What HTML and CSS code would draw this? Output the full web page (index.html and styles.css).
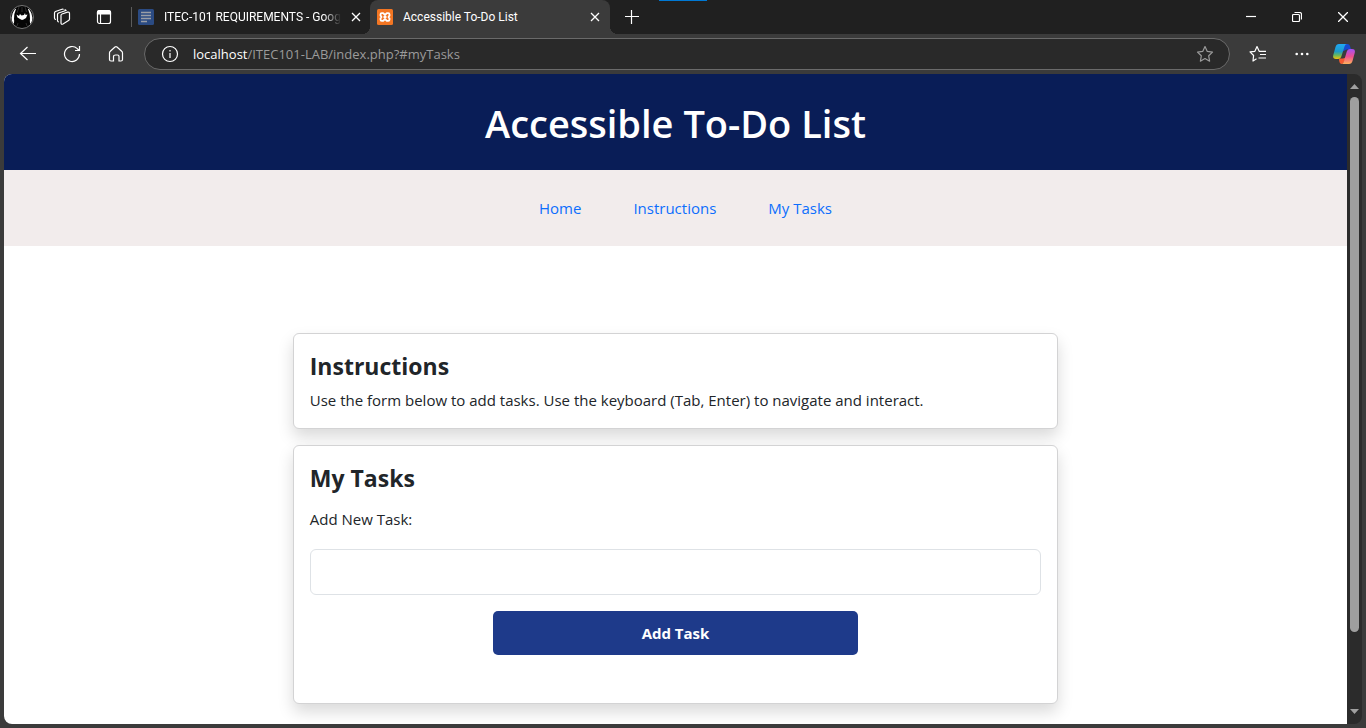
FILE: index.html
```html
<!DOCTYPE html>
<html lang="en">
<head>
<meta charset="utf-8">
<title>Accessible To-Do List</title>
<link rel="stylesheet" href="styles.css">
</head>
<body class="browser">
<div class="tabstrip">
  <button class="tool" aria-label="Profile">
    <svg width="24" height="24" viewBox="0 0 24 24"><circle cx="12" cy="12" r="11.5" fill="#050505"/><path d="M5 4Q-1 12 3.500 19Q4.500 17 4 14Q4 8 6 4ZM19 4Q25 12 20.500 19Q19.500 17 20 14Q20 8 18 4Z" fill="#fff"/><path d="M6.500 9.500 9 11l1-2 1.500 1.500L14 10l1-2 .5 2 2-.5L16 13l-2.500 1.500-1.500.5-2-1-2.500-1.500Z" fill="#fff"/><path d="M9 2 7 8M12 2v5M15 2l1.500 5M8 18l-1 3M16 18l1 3" stroke="#3c3c3c" stroke-width=".7"/><circle cx="12" cy="12" r="11.500" fill="none" stroke="#777"/></svg>
  </button>
  <button class="tool" aria-label="Workspaces">
    <svg class="line" width="18" height="18" viewBox="0 0 18 18"><path d="M9 6 14.500 4.200q2-.4 2 1.300v5.500q0 1-1 1.500l-5.500 3.500q-2 .8-2-1V7.500q0-1.200 1-1.500ZM6 14q-1.500 0-1.500-1.500V6.500q0-1 1-1.500L13 2.500q-.3-.8-1.500-.5M3 11.500q-1.500 0-1.500-1.500V5q0-1 1-1.500L9 1.300q1-.3 1.500.200"/></svg>
  </button>
  <button class="tool" aria-label="Tab actions">
    <svg class="line" width="16" height="16" viewBox="0 0 16 16"><rect x="1.500" y="1.500" width="13" height="13" rx="2"/><path d="M1.500 3.500q0-2 2-2h9q2 0 2 2V5h-13Z" fill="#fff"/><path d="M4.500 5v9.500"/></svg>
  </button>
  <span class="divider"></span>
  <div class="tab">
    <svg width="16" height="16" viewBox="0 0 16 16"><rect width="16" height="16" rx="1.500" fill="#2b4b83"/><path d="M3 3.500h10M3 6.500h10M3 9.500h10M3 12.500h6" stroke="#9a9ea6" stroke-width="1.300"/></svg>
    <span class="tab-title faded">ITEC-101 REQUIREMENTS - Goog</span>
    <button class="tab-close" aria-label="Close tab"><svg class="line" width="10" height="10" viewBox="0 0 10 10"><path d="M1 1l8 8M9 1 1 9" stroke-width="1.300"/></svg></button>
  </div>
  <div class="tab active">
    <svg width="16" height="16" viewBox="0 0 16 16"><rect width="16" height="16" rx="1.500" fill="#f37623"/><path d="M4.800 4.200h1.400L8 6l1.800-1.800h1.400q1.300 0 1.300 1.300v1L11.500 8l1 1.500v1q0 1.300-1.300 1.300H9.800L8 10l-1.800 1.800H4.800q-1.300 0-1.300-1.300v-1l1-1.500-1-1.500v-1q0-1.300 1.300-1.300ZM6.500 8h3" fill="none" stroke="#fff" stroke-width="1.800" stroke-linejoin="round"/></svg>
    <span class="tab-title">Accessible To-Do List</span>
    <button class="tab-close" aria-label="Close tab"><svg class="line" width="10" height="10" viewBox="0 0 10 10"><path d="M1 1l8 8M9 1 1 9" stroke-width="1.300"/></svg></button>
  </div>
  <button class="tool" aria-label="New tab">
    <svg class="line" width="14" height="14" viewBox="0 0 14 14"><path d="M0 6.500h14M6.500 0v14"/></svg>
  </button>
  <span class="accent"></span>
  <div class="window-controls">
    <button aria-label="Minimize"><svg class="line" width="10" height="10" viewBox="0 0 10 10"><path d="M0 4.500h10"/></svg></button>
    <button aria-label="Restore"><svg class="line" width="10" height="10" viewBox="0 0 10 10"><rect x=".5" y="2.500" width="7" height="7" rx="1"/><path d="M2.500.500H7.500q2 0 2 2V7.500"/></svg></button>
    <button aria-label="Close"><svg class="line" width="10" height="10" viewBox="0 0 10 10"><path d="M0 0l10 10M10 0 0 10" stroke-width="1.300"/></svg></button>
  </div>
</div>

<div class="toolbar">
  <button class="tool" aria-label="Back"><svg class="line" width="18" height="16" viewBox="0 0 18 16"><path d="M8.500 1 1.500 7.500l7 6.500M1.500 7.500H17"/></svg></button>
  <button class="tool" aria-label="Reload"><svg class="line" width="18" height="18" viewBox="0 0 18 18"><path d="M16.500 9A7.500 7.500 0 1 1 14.300 3.700L16 5.500M16.500 1V5.500h-4.500"/></svg></button>
  <button class="tool" aria-label="Home"><svg class="line" width="16" height="18" viewBox="0 0 16 18"><path d="M1.500 8q0-1 .8-1.700L7 2q1-.8 2 0l4.700 4.300q.8.700.8 1.700v6.500q0 1.500-1.500 1.500h-2V11.500q0-1.500-1.500-1.500h-2Q5.500 10 5.500 11.500V16H3Q1.500 16 1.500 14.500Z"/></svg></button>
  <div class="address">
    <svg class="line" width="18" height="18" viewBox="0 0 18 18"><circle cx="9" cy="9" r="7.500"/><path d="M9 8v5M9 5v1.500"/></svg>
    <span class="url"><span class="host">localhost</span>/ITEC101-LAB/index.php?#myTasks</span>
    <button class="favorite" aria-label="Add to favorites"><svg class="line" width="18" height="18" viewBox="0 0 18 18"><path d="m9 1.500 2.300 4.900 5.200.7-3.800 3.700.9 5.400L9 13.600l-4.600 2.600.9-5.400L1.500 7.100l5.200-.7Z" stroke-linejoin="round"/></svg></button>
  </div>
  <button class="tool" aria-label="Favorites"><svg class="line" width="18" height="18" viewBox="0 0 18 18"><path d="M7.500 13.800 4 16l.6-5.500L1 6.900l4.900-.6L8 1.500l2.200 4.800H17M11 9.500h6M9.500 13h7.500" stroke-linejoin="round"/></svg></button>
  <button class="tool" aria-label="Settings and more"><svg width="14" height="4" viewBox="0 0 14 4" fill="#fff"><circle cx="1.700" cy="2" r="1.300"/><circle cx="7" cy="2" r="1.300"/><circle cx="12.300" cy="2" r="1.300"/></svg></button>
  <button class="tool narrow" aria-label="Copilot">
    <svg width="22" height="22" viewBox="0 0 22 22">
      <defs>
        <linearGradient id="cool" x1="0" y1="0" x2="0" y2="1"><stop offset="0" stop-color="#20a8f5"/><stop offset=".5" stop-color="#1d9bc7"/><stop offset=".75" stop-color="#68b85c"/><stop offset="1" stop-color="#f2c30b"/></linearGradient>
        <linearGradient id="warm" x1="0" y1="0" x2="0" y2="1"><stop offset="0" stop-color="#a350f5"/><stop offset=".5" stop-color="#ed4f91"/><stop offset="1" stop-color="#ffb15a"/></linearGradient>
      </defs>
      <path d="M11 1h3.500q2 0 2.500 2l1 3.500h-4.500l-4 2Z" fill="#1749cf"/>
      <path d="M6 15.500h4l3-1-2 4.500q-1 2-2 2-3 0-3-5.500Z" fill="#f55930"/>
      <path d="M6 1h8q-1.700 0-2.400 2.300L8.500 13q-.8 3-3.500 3H3Q-.7 16 .3 12L2.500 4Q3.300 1 6 1Z" fill="url(#cool)"/>
      <path d="M16 21H8.500q1.700 0 2.300-2.300L13.500 9.500q.8-3.500 3.500-3.500h2q3.700 0 2.700 4L19.500 18q-.8 3-3.500 3Z" fill="url(#warm)"/>
    </svg>
  </button>
</div>

<div class="viewport">
  <div class="page">
    <header class="page-header"><h1>Accessible To-Do List</h1></header>
    <nav class="page-nav">
      <a href="#home">Home</a>
      <a href="#instructions">Instructions</a>
      <a href="#myTasks">My Tasks</a>
    </nav>
    <main class="content">
      <section class="card" id="instructions">
        <h2>Instructions</h2>
        <p>Use the form below to add tasks. Use the keyboard (Tab, Enter) to navigate and interact.</p>
      </section>
      <section class="card tasks" id="myTasks">
        <h2>My Tasks</h2>
        <form class="task-form">
          <label for="task">Add New Task:</label>
          <input type="text" id="task">
          <button type="submit">Add Task</button>
        </form>
      </section>
    </main>
  </div>
  <div class="scrollbar" aria-hidden="true">
    <svg width="9" height="5" viewBox="0 0 9 5"><path d="M0 5 4.500 0 9 5Z" fill="#a0a0a0"/></svg>
    <div class="track"><div class="thumb"></div></div>
    <svg width="9" height="5" viewBox="0 0 9 5"><path d="M0 0h9L4.500 5Z" fill="#a0a0a0"/></svg>
  </div>
</div>
</body>
</html>
```
FILE: styles.css
```css
* {
  box-sizing: border-box;
}

.browser {
  margin: 0;
  height: 100vh;
  display: flex;
  flex-direction: column;
  overflow: hidden;
  background: #3b3b3b;
  color: #fff;
  font-family: "Open Sans", "Noto Sans", sans-serif;
}

button {
  border: 0;
  padding: 0;
  background: none;
  color: inherit;
  font: inherit;
}

svg {
  display: block;
  flex: none;
}

.line {
  fill: none;
  stroke: #fff;
  stroke-width: 1.2;
}

/* Tab strip */
.tabstrip {
  position: relative;
  display: flex;
  align-items: center;
  height: 34px;
  background: #202020;
}

.tool {
  flex: none;
  width: 44px;
  height: 34px;
  display: flex;
  align-items: center;
  justify-content: center;
}

.tool.narrow {
  width: 40px;
}

.tabstrip .tool:nth-child(2) {
  width: 36px;
}

.tabstrip .tool:nth-child(3) {
  width: 48px;
}

.divider {
  width: 1px;
  height: 20px;
  margin-left: 3px;
  background: #5c5c5c;
}

.tab {
  display: flex;
  align-items: center;
  gap: 10px;
  width: 238px;
  height: 34px;
  padding: 0 10px 0 6px;
  font-family: Roboto, sans-serif;
  font-size: 12px;
}

.tab.active {
  position: relative;
  width: 240px;
  padding-left: 7px;
  border-radius: 8px 8px 0 0;
  background: #3b3b3b;
}

.tab.active::before,
.tab.active::after {
  content: "";
  position: absolute;
  bottom: 0;
  width: 8px;
  height: 8px;
}

.tab.active::before {
  right: 100%;
  background: radial-gradient(circle at 0 0, #202020 8px, #3b3b3b 8px);
}

.tab.active::after {
  left: 100%;
  background: radial-gradient(circle at 100% 0, #202020 8px, #3b3b3b 8px);
}

.tab-title {
  flex: 1;
  white-space: nowrap;
}

.tab-title.faded {
  mask-image: linear-gradient(to right, #000 90%, transparent);
}

.tab-close {
  width: 10px;
}

.accent {
  position: absolute;
  top: 0;
  left: 659px;
  width: 48px;
  height: 1px;
  background: #0078d4;
}

.window-controls {
  display: flex;
  margin-left: auto;
}

.window-controls button {
  width: 46px;
  height: 34px;
  display: flex;
  align-items: center;
  justify-content: center;
}

/* Toolbar */
.toolbar {
  display: flex;
  align-items: center;
  height: 40px;
  padding: 0 2px 0 6px;
}

.address {
  flex: 1;
  display: flex;
  align-items: center;
  gap: 14px;
  height: 32px;
  margin: 0 6px;
  padding: 0 15px 0 16px;
  border: 1px solid #6a6a6a;
  border-radius: 16px;
  background: #292929;
}

.url {
  flex: 1;
  color: #9b9b9b;
  font-size: 13px;
}

.host {
  color: #fff;
}

.favorite .line {
  stroke: #9b9b9b;
}

/* Viewport */
.viewport {
  flex: 1;
  min-height: 0;
  display: flex;
  margin: 0 4px 4px;
  overflow: hidden;
  border-radius: 8px;
  background: #2b2b2b;
}

.page {
  flex: 1;
  overflow: hidden;
  background: #fff;
  color: #212529;
  font-size: 15px;
  line-height: 24px;
}

.page-header {
  padding: 25px 24px 23px;
  background: #091d57;
  color: #fff;
  text-align: center;
}

.page-header h1 {
  margin: 0;
  font-size: 38px;
  font-weight: 600;
  line-height: 48px;
}

.page-nav {
  display: flex;
  justify-content: center;
  gap: 52px;
  padding: 26px 0 26px 20px;
  background: #f2ecec;
}

.page-nav a {
  color: #0d6efd;
  text-decoration: none;
}

.content {
  display: flex;
  flex-direction: column;
  gap: 16px;
  width: 57%;
  margin: 87px auto 0;
}

.card {
  padding: 16px;
  border: 1px solid #d3d3d4;
  border-radius: 6px;
  background: #fff;
  box-shadow: 0 8px 16px rgba(0, 0, 0, 0.15);
}

.card h2 {
  margin: 0 0 6px;
  font-size: 23px;
  font-weight: 700;
  line-height: 32px;
}

.card p {
  margin: 0;
}

.tasks {
  padding-bottom: 48px;
}

.task-form {
  display: flex;
  flex-direction: column;
  padding-top: 7px;
}

.task-form input {
  height: 46px;
  margin: 18px 0 16px;
  padding: 0 12px;
  border: 1px solid #dee2e6;
  border-radius: 6px;
  background: #fff;
  font: inherit;
}

.task-form button {
  align-self: center;
  width: 50%;
  height: 44px;
  border-radius: 5px;
  background: #1e3a8a;
  color: #fff;
  font-weight: 700;
}

.scrollbar {
  flex: none;
  width: 15px;
  display: flex;
  flex-direction: column;
  align-items: center;
  gap: 8px;
  padding: 10px 0;
}

.track {
  flex: 1;
  width: 9px;
}

.thumb {
  height: 88.5%;
  border-radius: 5px;
  background: #9f9f9f;
}
```
